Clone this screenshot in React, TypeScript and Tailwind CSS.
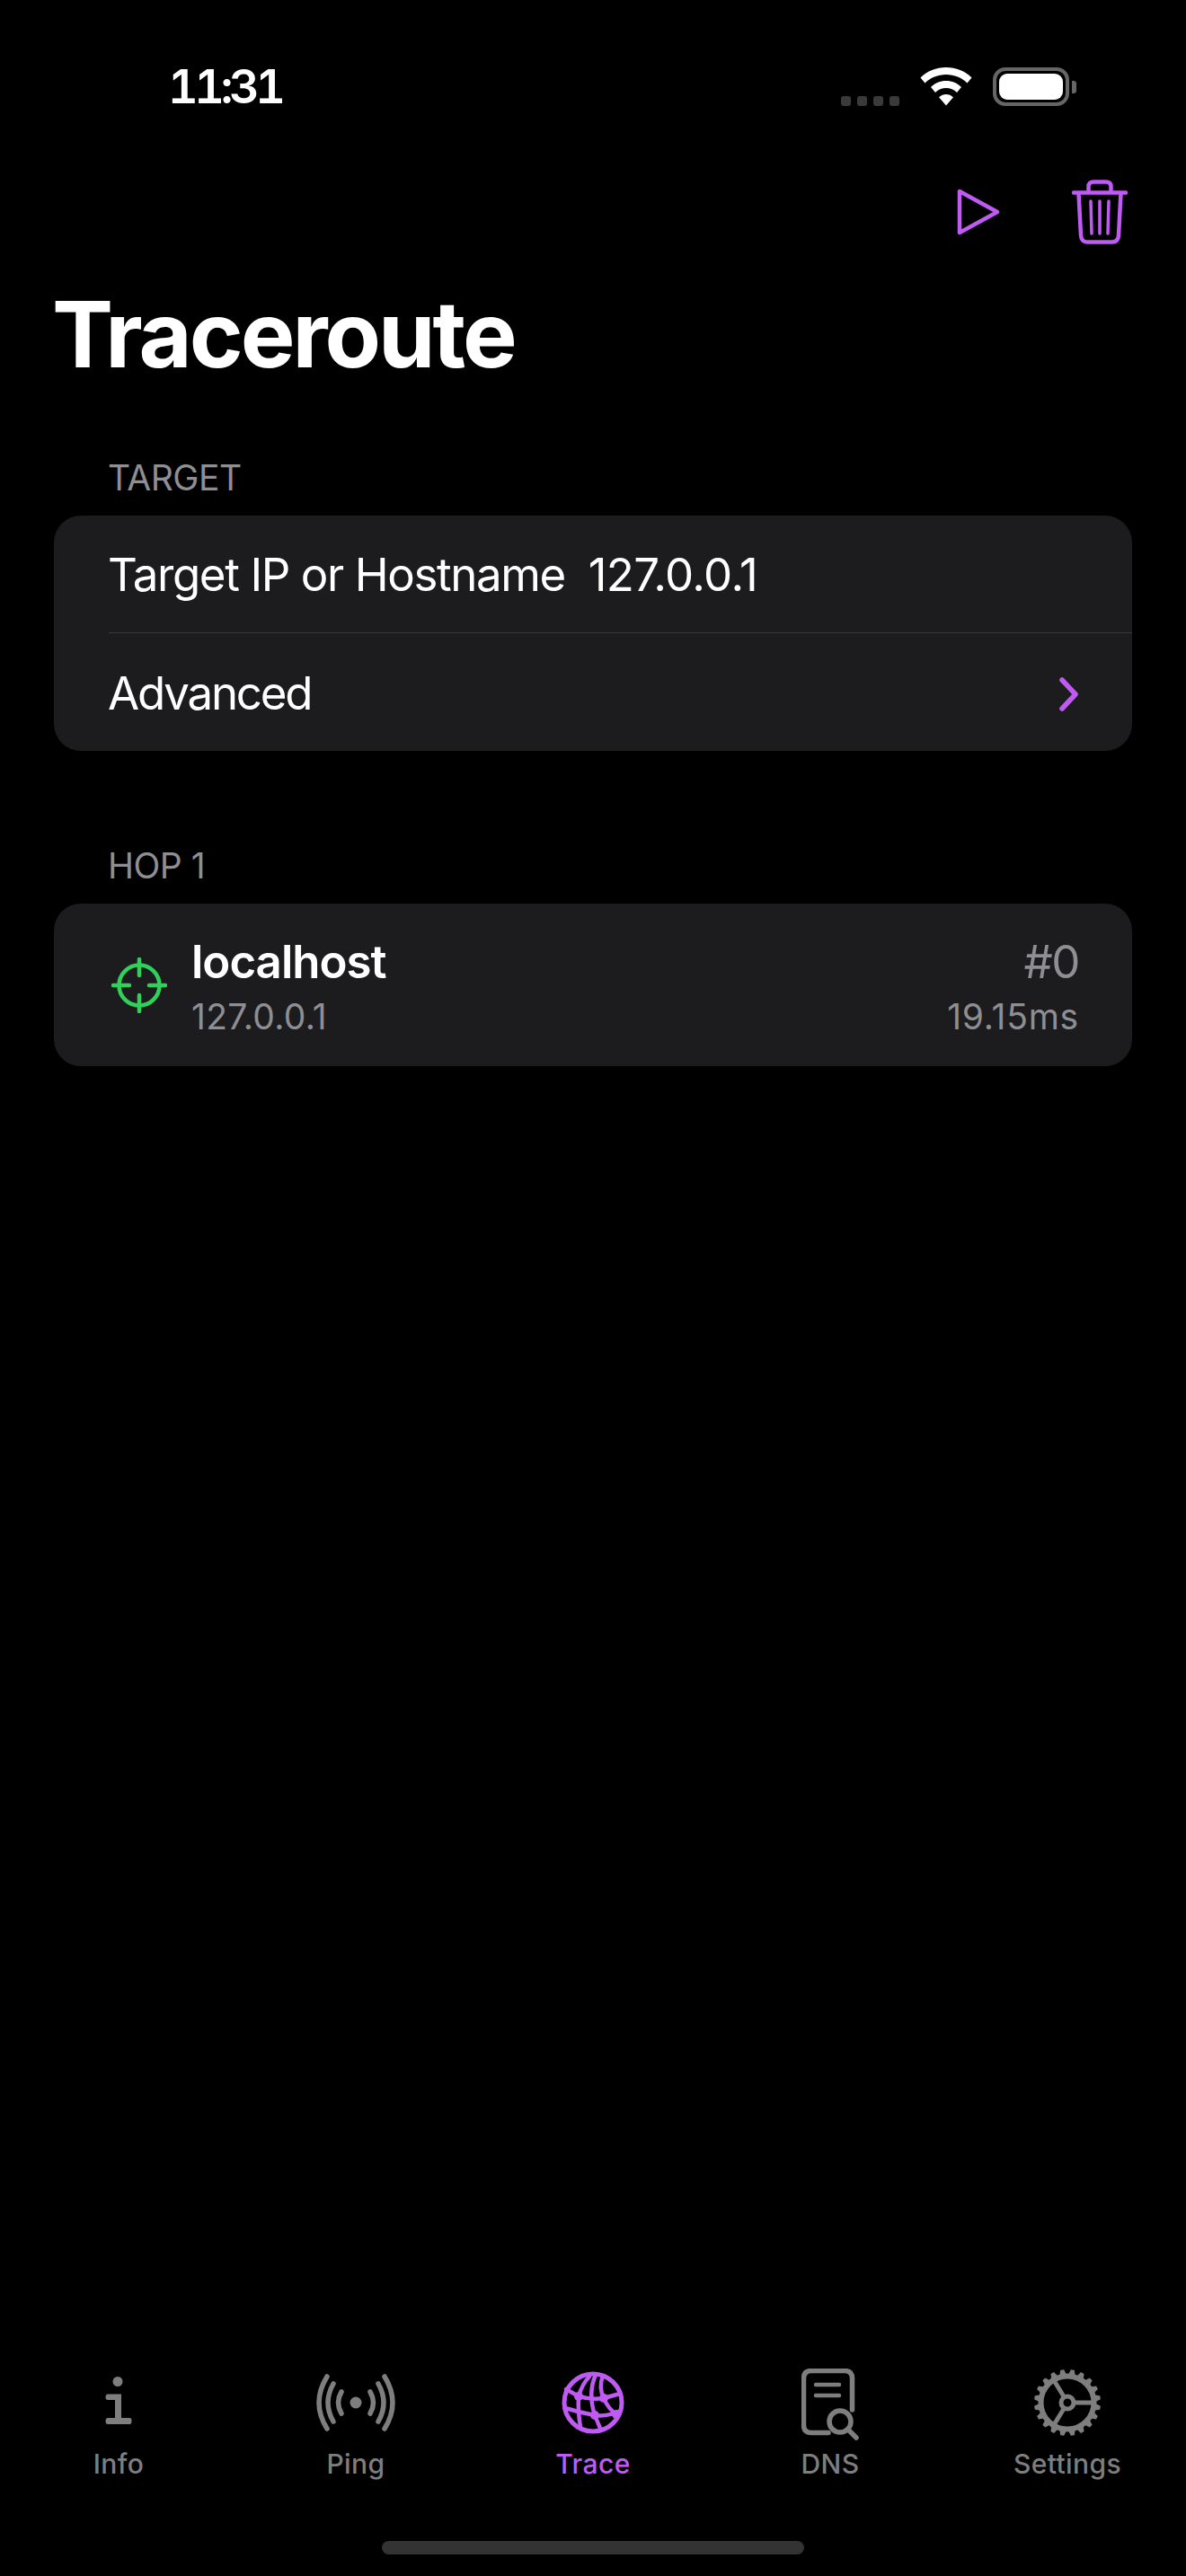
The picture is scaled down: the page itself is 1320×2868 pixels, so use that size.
import React from 'react';

const PURPLE = '#bf5af2';

const PlayIcon = () => (
  <svg width="48" height="54" viewBox="0 0 48 54" fill="none" stroke={PURPLE} strokeWidth="4.5" strokeLinejoin="round">
    <path d="M3 4 L45 27 L3 50 Z" />
  </svg>
);

const TrashIcon = () => (
  <svg width="62" height="72" viewBox="0 0 62 72" fill="none" stroke={PURPLE} strokeLinecap="round" strokeLinejoin="round">
    <path d="M2 14.5 H60" strokeWidth="4.5" />
    <path d="M18.5 13 V8 Q18.5 2.5 24 2.5 H38 Q43.5 2.5 43.5 8 V13" strokeWidth="4.5" />
    <path d="M7.5 15 L10 62 Q10.5 69.5 17 69.5 H45 Q51.5 69.5 52 62 L54.5 15" strokeWidth="4.5" />
    <path d="M21 24 L22 60 M31 24 V60 M41 24 L40 60" strokeWidth="3.5" />
  </svg>
);

const WifiIcon = () => (
  <svg width="58" height="43" viewBox="0 0 58 43" fill="#fff">
    <path d="M29 0 C40 0 50 4 57.5 11.5 L52.5 17.5 C46.5 11.5 38 8 29 8 C20 8 11.5 11.5 5.5 17.5 L0.5 11.5 C8 4 18 0 29 0 Z" />
    <path d="M29 15 C35.5 15 41.5 17.5 46 22 L41 28 C37.8 24.8 33.5 23 29 23 C24.5 23 20.2 24.8 17 28 L12 22 C16.5 17.5 22.5 15 29 15 Z" />
    <path d="M29 30 C32 30 34.8 31.2 37 33.3 L29 42.5 L21 33.3 C23.2 31.2 26 30 29 30 Z" />
  </svg>
);

const TargetIcon = () => (
  <svg width="62" height="62" viewBox="0 0 62 62" fill="none" stroke="#30d158" strokeWidth="4.5" strokeLinecap="round">
    <circle cx="31" cy="31" r="22.5" />
    <path d="M31 2 V20 M31 42 V60 M2 31 H20 M42 31 H60" />
  </svg>
);

const InfoIcon = () => (
  <svg className="mb-[5px]" width="30" height="54" viewBox="0 0 30 54" fill="#7e7e7e">
    <circle cx="14" cy="5.5" r="5.5" />
    <path d="M3 19.5 H18 V46 H27.5 Q29.5 46 29.5 49 Q29.5 53 27.5 53 H3 Q0.5 53 0.5 49.5 Q0.5 46 3 46 H11 V26 H3 Q0.5 26 0.5 23 Q0.5 19.5 3 19.5 Z" />
  </svg>
);

const PingIcon = () => (
  <svg width="90" height="64" viewBox="0 0 90 64" fill="none" stroke="#7e7e7e" strokeWidth="5.5" strokeLinecap="round">
    <circle cx="45" cy="32" r="6.5" fill="#7e7e7e" stroke="none" />
    <path d="M29 20 Q22 32 29 44 M61 20 Q68 32 61 44" />
    <path d="M20 11 Q8 32 20 53 M70 11 Q82 32 70 53" />
    <path d="M13 3 Q-5 32 13 61 M77 3 Q95 32 77 61" />
  </svg>
);

const GlobeIcon = () => (
  <svg width="70" height="70" viewBox="0 0 70 70" fill="none" stroke={PURPLE} strokeWidth="4.5" strokeLinecap="round" strokeLinejoin="round">
    <circle cx="35" cy="35" r="32" strokeWidth="5" />
    <path d="M31 6 Q23 14 19 28 Q18 44 21 62" />
    <path d="M38 4 Q29 24 37 49 L44 66" />
    <path d="M46 5 Q41 18 47 30 Q52 42 61 48" />
    <path d="M5 20 L19 28 Q33 32 47 30 L65 25" />
    <path d="M4 41 Q20 46 37 49 Q50 51 66 44" />
    <circle cx="19" cy="28" r="5" fill={PURPLE} stroke="none" />
    <circle cx="47" cy="30" r="5" fill={PURPLE} stroke="none" />
    <circle cx="37" cy="49" r="5" fill={PURPLE} stroke="none" />
    <circle cx="61" cy="48" r="5" fill={PURPLE} stroke="none" />
  </svg>
);

const DnsIcon = () => (
  <svg className="mt-[4px]" width="64" height="80" viewBox="0 0 64 80" fill="none" stroke="#7e7e7e" strokeLinecap="round">
    <path d="M30 71.5 H11 Q2.5 71.5 2.5 63 V11 Q2.5 2.5 11 2.5 H48 Q56.5 2.5 56.5 11 V46" strokeWidth="5.5" />
    <path d="M16 18 H42 M16 30 H42" strokeWidth="4.5" />
    <circle cx="43" cy="59" r="12" strokeWidth="5.5" />
    <path d="M52 68 L61 77" strokeWidth="5.5" />
  </svg>
);

const teeth = Array.from({ length: 20 }, (_, i) => i * 18);

const GearIcon = () => (
  <svg width="76" height="76" viewBox="0 0 76 76" fill="none" stroke="#7e7e7e" strokeWidth="5">
    <circle cx="38" cy="38" r="29.5" strokeWidth="6" />
    {teeth.map((deg) => (
      <path key={deg} d="M33.5 9 L36 1 H40 L42.5 9 Z" fill="#7e7e7e" stroke="none" transform={`rotate(${deg + 9} 38 38)`} />
    ))}
    <circle cx="38" cy="38" r="7" />
    <path d="M45 38 H67 M34.5 32 L21 10 M34.5 44 L21 66" />
  </svg>
);

const tabs = [
  { label: 'Info', icon: <InfoIcon /> },
  { label: 'Ping', icon: <PingIcon /> },
  { label: 'Trace', icon: <GlobeIcon />, active: true },
  { label: 'DNS', icon: <DnsIcon /> },
  { label: 'Settings', icon: <GearIcon /> },
];

export default function App() {
  return (
    <div className="w-[1320px] h-[2868px] bg-black text-white flex flex-col overflow-hidden font-['Inter',sans-serif]">
      {/* Status bar */}
      <div className="h-[200px] flex items-start pt-[75px] pl-[187px] pr-[122px] justify-between">
        <span className="text-[52px] leading-[44px] font-semibold tabular-nums tracking-[-4.4px]">11:31</span>
        <div className="flex items-end gap-[23px]">
          <div className="flex gap-[7px]">
            <div className="w-[11px] h-[11px] rounded-[3px] bg-[#3a3a3a]" />
            <div className="w-[11px] h-[11px] rounded-[3px] bg-[#3a3a3a]" />
            <div className="w-[11px] h-[11px] rounded-[3px] bg-[#3a3a3a]" />
            <div className="w-[11px] h-[11px] rounded-[3px] bg-[#3a3a3a]" />
          </div>
          <WifiIcon />
          <div className="flex items-center gap-[3px]">
            <div className="w-[85px] h-[43px] rounded-[14px] border-[4px] border-[#666666] p-[3px]">
              <div className="w-full h-full rounded-[9px] bg-white" />
            </div>
            <div className="w-[5px] h-[14px] rounded-r-[3px] bg-[#666666]" />
          </div>
        </div>
      </div>

      {/* Toolbar */}
      <div className="h-[72px] flex items-center justify-end gap-[80px] pr-[65px]">
        <PlayIcon />
        <TrashIcon />
      </div>

      <h1 className="mt-[45px] pl-[58px] text-[102px] leading-[110px] font-bold tracking-[-3px]">Traceroute</h1>

      <div className="mt-[85px] pl-[120px] h-[40px] flex items-center text-[39px] text-[#8e8e93] tracking-[-0.5px]">TARGET</div>
      <div className="mt-[22px] mx-[60px] rounded-[30px] bg-[#1c1c1e] text-[51px]">
        <div className="h-[130px] pt-[2px] pl-[60px] flex items-center whitespace-pre tracking-[-1.4px]">
          <span>Target IP or Hostname  </span>
          <span className="tracking-[-0.6px]">127.0.0.1</span>
        </div>
        <div className="ml-[61px] h-px bg-[#38383a]" />
        <div className="h-[131px] pt-[4px] pl-[60px] pr-[59px] flex items-center justify-between tracking-[-2.2px]">
          <span>Advanced</span>
          <svg width="22" height="38" viewBox="0 0 22 38" fill="none" stroke={PURPLE} strokeWidth="5.5" strokeLinecap="round" strokeLinejoin="round">
            <path d="M3 3 L18 19 L3 35" />
          </svg>
        </div>
      </div>

      <div className="mt-[108px] pl-[120px] h-[40px] flex items-center text-[39px] text-[#8e8e93] tracking-[-0.5px]">HOP 1</div>
      <div className="mt-[22px] mx-[60px] h-[181px] rounded-[30px] bg-[#1c1c1e] pl-[64px] pr-[59px] flex items-center">
        <TargetIcon />
        <div className="ml-[27px] pt-[4px] flex-1 flex flex-col gap-[5px]">
          <div className="flex items-center justify-between h-[62px]">
            <span className="text-[51px] font-semibold tracking-[-1px]">localhost</span>
            <span className="text-[51px] text-[#8e8e93] tracking-[-1.5px]">#0</span>
          </div>
          <div className="flex items-center justify-between h-[50px] text-[39px] text-[#8e8e93] tracking-[0.3px]">
            <span>127.0.0.1</span>
            <span className="tracking-[0.8px]">19.15ms</span>
          </div>
        </div>
      </div>

      <div className="flex-1" />

      {/* Tab bar */}
      <div className="grid grid-cols-5 h-[130px]">
        {tabs.map((tab) => (
          <div key={tab.label} className="flex flex-col items-center">
            <div className="h-[72px] flex items-center justify-center">{tab.icon}</div>
            <span className={`mt-[14px] text-[30px] leading-[36px] font-medium tracking-[0.4px] ${tab.active ? 'text-[#bf5af2]' : 'text-[#7e7e7e]'}`}>{tab.label}</span>
          </div>
        ))}
      </div>
      <div className="h-[99px] flex justify-center items-end pb-[24px]">
        <div className="w-[470px] h-[15px] rounded-full bg-[#333333]" />
      </div>
    </div>
  );
}
